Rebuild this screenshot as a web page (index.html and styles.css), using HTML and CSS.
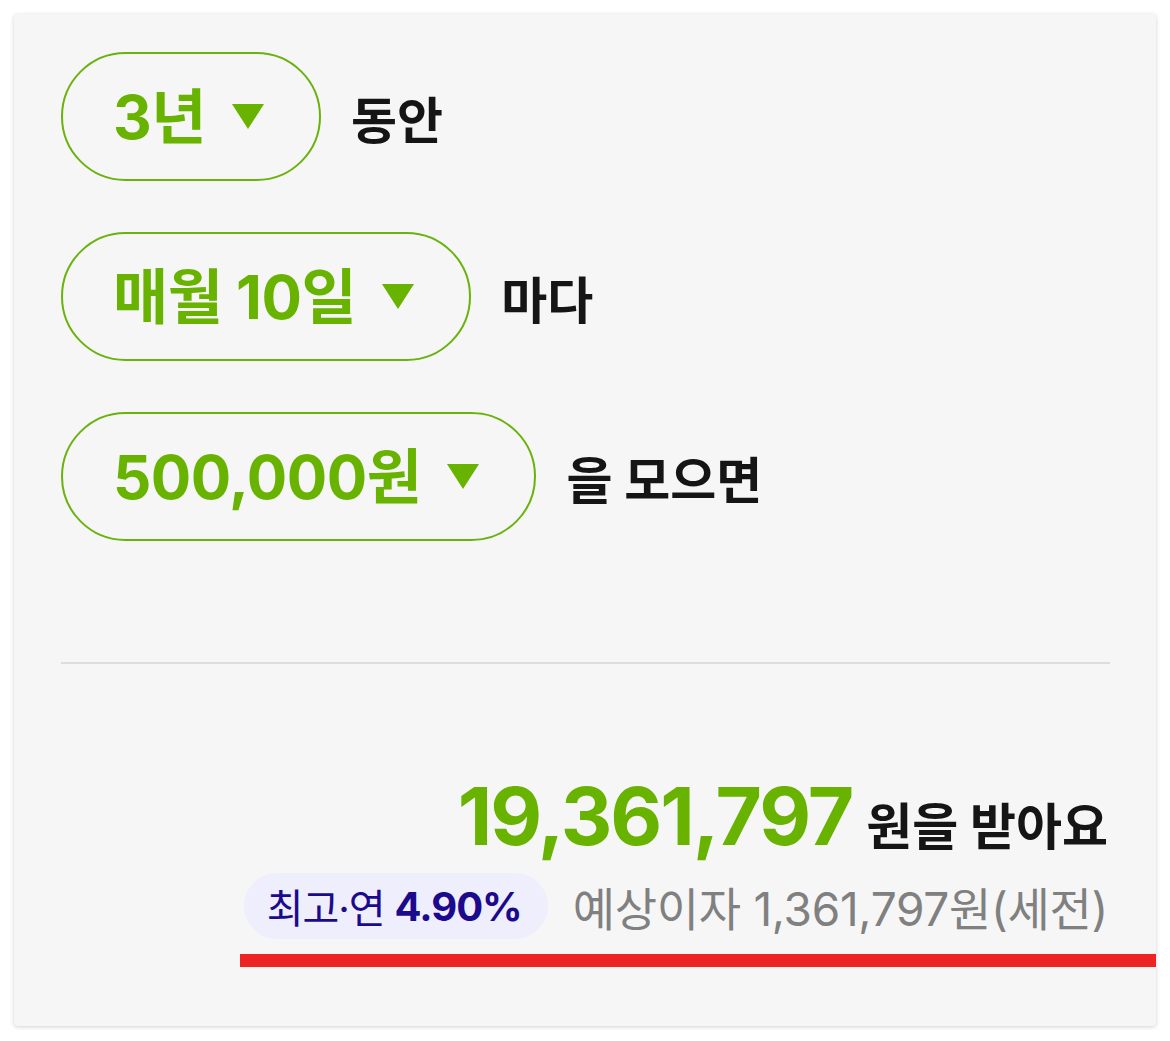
FILE: index.html
```html
<!DOCTYPE html>
<html lang="ko">
<head>
<meta charset="utf-8">
<link rel="stylesheet" href="styles.css">
</head>
<body>
<div class="card">
  <div class="rows">
    <div class="row">
      <button class="pill"><span class="pill-text">3년</span><span class="caret"></span></button>
      <span class="suffix">동안</span>
    </div>
    <div class="row">
      <button class="pill"><span class="pill-text">매월 10일</span><span class="caret"></span></button>
      <span class="suffix">마다</span>
    </div>
    <div class="row">
      <button class="pill"><span class="pill-text">500,000원</span><span class="caret"></span></button>
      <span class="suffix">을 모으면</span>
    </div>
  </div>
  <hr class="divider">
  <div class="result">
    <div class="total"><span class="amount">19,361,797</span><span class="total-suffix">원을 받아요</span></div>
    <div class="meta">
      <span class="badge">최고·연<b>4.90%</b></span>
      <span class="interest">예상이자 1,361,797원(세전)</span>
    </div>
    <div class="highlight"></div>
  </div>
</div>
</body>
</html>
```
FILE: styles.css
```css
html, body {
  margin: 0;
  padding: 0;
  background: #ffffff;
}
body {
  font-family: Inter, "Noto Sans CJK KR", "Noto Sans", sans-serif;
  padding: 14px 14px 15px 14px;
}
.card {
  width: 1142px;
  height: 1012px;
  box-sizing: border-box;
  background: #f6f6f6;
  border-radius: 4px;
  box-shadow: 0 1px 4px rgba(0, 0, 0, 0.18);
  padding: 38px 46px 0 47px;
}
.rows {
  display: flex;
  flex-direction: column;
  gap: 51px;
}
.row {
  display: flex;
  align-items: center;
}
.pill {
  height: 129px;
  box-sizing: border-box;
  border: 2px solid #6ab20c;
  border-radius: 65px;
  background: transparent;
  padding: 0 55px 0 50px;
  display: flex;
  align-items: center;
  gap: 26px;
  font-family: inherit;
  cursor: pointer;
}
.pill-text {
  color: #68b200;
  font-size: 60px;
  font-weight: 700;
  letter-spacing: -0.5px;
  line-height: 1;
}
.caret {
  width: 0;
  height: 0;
  border-left: 16px solid transparent;
  border-right: 16px solid transparent;
  border-top: 25px solid #68b200;
}
.suffix {
  margin-left: 30px;
  font-size: 50px;
  font-weight: 700;
  color: #151515;
}
.divider {
  border: 0;
  border-top: 2px solid #dddddd;
  margin: 121px 0 0 0;
}
.result {
  display: flex;
  flex-direction: column;
  align-items: flex-end;
  margin-top: 108px;
}
.total {
  display: flex;
  align-items: baseline;
  gap: 14px;
  margin-right: 2px;
}
.amount {
  color: #68b200;
  font-size: 80px;
  font-weight: 700;
  letter-spacing: -2px;
  line-height: 1.1;
}
.total-suffix {
  color: #151515;
  font-size: 50px;
  font-weight: 700;
}
.meta {
  display: flex;
  align-items: center;
  gap: 25px;
  margin-top: 13px;
  margin-right: 2px;
}
.badge {
  background: #eeeefc;
  color: #1c0a8c;
  border-radius: 33px;
  height: 66px;
  padding: 0 26px 0 23px;
  display: flex;
  align-items: center;
  font-size: 40px;
  letter-spacing: -1px;
}
.badge b {
  font-weight: 700;
  margin-left: 10px;
}
.interest {
  color: #808080;
  font-size: 46px;
  letter-spacing: -0.3px;
}
.highlight {
  width: 916px;
  height: 13px;
  background: #ee2424;
  margin-top: 15px;
  margin-right: -46px;
}
```
